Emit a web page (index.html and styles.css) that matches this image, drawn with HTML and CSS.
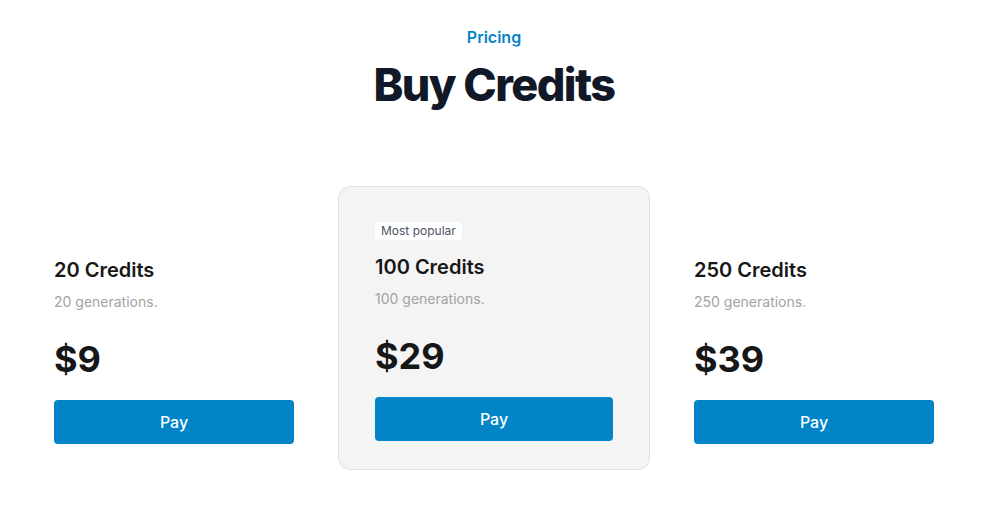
FILE: index.html
```html
<!DOCTYPE html>
<html lang="en">
<head>
<meta charset="utf-8">
<title>Buy Credits</title>
<link rel="stylesheet" href="styles.css">
</head>
<body>
<main class="page">
  <header class="intro">
    <p class="eyebrow">Pricing</p>
    <h1 class="title">Buy Credits</h1>
  </header>
  <section class="plans">
    <div class="plan">
      <h3 class="plan-name">20 Credits</h3>
      <p class="plan-desc">20 generations.</p>
      <p class="plan-price">$9</p>
      <button class="pay">Pay</button>
    </div>
    <div class="plan plan-featured">
      <span class="badge">Most popular</span>
      <h3 class="plan-name">100 Credits</h3>
      <p class="plan-desc">100 generations.</p>
      <p class="plan-price">$29</p>
      <button class="pay">Pay</button>
    </div>
    <div class="plan">
      <h3 class="plan-name">250 Credits</h3>
      <p class="plan-desc">250 generations.</p>
      <p class="plan-price">$39</p>
      <button class="pay">Pay</button>
    </div>
  </section>
</main>
</body>
</html>
```

FILE: styles.css
```css
* { box-sizing: border-box; }
html, body { margin: 0; padding: 0; background: #ffffff; }
body { font-family: Inter, "Noto Sans", sans-serif; color: #171717; }
.page { padding: 25px 17px 0 18px; }
.intro { text-align: center; }
.eyebrow { margin: 0; font-size: 16px; line-height: 24px; font-weight: 600; color: #0284c7; }
.title { margin: 12px 0 0; font-size: 45px; line-height: 48px; font-weight: 800; letter-spacing: -0.035em; color: #111827; }
.plans { margin-top: 77px; display: grid; grid-template-columns: repeat(3, 312px); gap: 8px; align-items: start; }
.plan { display: flex; flex-direction: column; align-items: flex-start; padding: 70px 36px 0; }
.plan-featured { padding: 35px 36px 28px; background: #f4f4f4; border: 1px solid #e2e2e2; border-radius: 12px; }
.badge { font-size: 12px; line-height: 18px; padding: 0 6px; background: #ffffff; border-radius: 4px; color: #4b5563; margin-bottom: 13px; }
.plan-name { margin: 0; font-size: 20px; line-height: 28px; font-weight: 600; color: #171717; }
.plan-desc { margin: 8px 0 0; font-size: 14px; line-height: 20px; color: #a3a3a3; }
.plan-price { margin: 27px 0 0; font-size: 36px; line-height: 40px; font-weight: 700; color: #171717; }
.pay { margin-top: 21px; width: 100%; height: 44px; border: 0; border-radius: 4px; background: #0284c7; color: #ffffff; font-family: inherit; font-size: 16px; font-weight: 500; }
```
